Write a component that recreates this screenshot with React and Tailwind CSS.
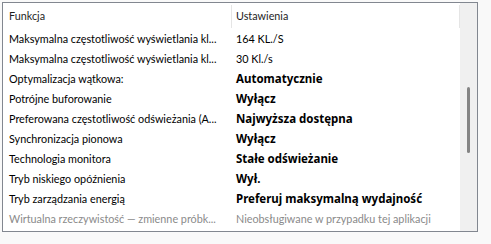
const rows = [
  { name: "Maksymalna częstotliwość wyświetlania kl...", value: "164 KL./S" },
  { name: "Maksymalna częstotliwość wyświetlania kl...", value: "30 Kl./s" },
  { name: "Optymalizacja wątkowa:", value: "Automatycznie", bold: true },
  { name: "Potrójne buforowanie", value: "Wyłącz", bold: true },
  { name: "Preferowana częstotliwość odświeżania (A...", value: "Najwyższa dostępna", bold: true },
  { name: "Synchronizacja pionowa", value: "Wyłącz", bold: true },
  { name: "Technologia monitora", value: "Stałe odświeżanie", bold: true },
  { name: "Tryb niskiego opóźnienia", value: "Wył.", bold: true },
  { name: "Tryb zarządzania energią", value: "Preferuj maksymalną wydajność", bold: true },
  { name: "Wirtualna rzeczywistość — zmienne próbk...", value: "Nieobsługiwane w przypadku tej aplikacji", muted: true },
];

export default function App() {
  return (
    <div className="w-[491px] h-[244px] bg-[#f9f9f9] pl-[2px] pt-[2px] font-['Lato',sans-serif] text-[10.8px]">
      <div className="w-[476px] h-[230px] border border-[#828790] bg-white flex">
        {/* list */}
        <div className="flex-1 flex flex-col">
          <div className="h-[26px] flex items-center text-[#1e1e1e]">
            <div className="w-[228px] pl-[6px] leading-none">Funkcja</div>
            <div className="w-px h-[23px] bg-[#e5e5e5]" />
            <div className="flex-1 pl-[4px] leading-none">Ustawienia</div>
            <div className="w-px h-[23px] bg-[#e5e5e5]" />
          </div>
          {rows.map((r, i) => (
            <div key={i} className={`h-[20px] flex items-center ${r.muted ? "text-[#8a8a8a]" : "text-black"}`}>
              <div className="w-[229px] pl-[6px] whitespace-nowrap leading-none">{r.name}</div>
              <div
                className={`flex-1 pl-[4px] whitespace-nowrap leading-none ${
                  r.bold ? "font-['Noto_Sans',sans-serif] font-bold text-[11.5px]" : ""
                }`}
              >
                {r.value}
              </div>
            </div>
          ))}
        </div>
        {/* scrollbar */}
        <div className="w-[17px] bg-[#f0f0f0] flex justify-center pt-[84px]">
          <div className="w-[3px] h-[66px] bg-[#858585] rounded-full" />
        </div>
      </div>
    </div>
  );
}
